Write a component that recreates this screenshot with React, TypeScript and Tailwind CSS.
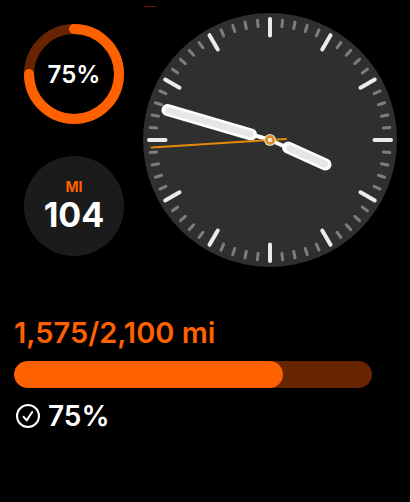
import React from "react";

const MINUTES = Array.from({ length: 60 }, (_, i) => i);

function ProgressRing({ percent }: { percent: number }) {
  return (
    <div className="relative size-[100px]">
      <svg viewBox="0 0 100 100" fill="none" strokeWidth="10" className="size-full -rotate-90" aria-hidden="true">
        <circle cx="50" cy="50" r="45" stroke="#662500" />
        <circle
          cx="50"
          cy="50"
          r="45"
          pathLength="100"
          stroke="#ff6000"
          strokeLinecap="round"
          strokeDasharray={`${percent} 100`}
        />
      </svg>
      <span className="absolute inset-0 flex items-center justify-center pt-0.5 text-2xl font-semibold">
        {percent}%
      </span>
    </div>
  );
}

function AnalogClock() {
  return (
    <svg viewBox="0 0 254 254" className="w-full" role="img" aria-label="Clock" strokeLinecap="round" fill="none">
      <circle cx="127" cy="127" r="127" fill="#2f2f2f" />
      {MINUTES.map((minute) => {
        const isHour = minute % 5 === 0;
        return (
          <line
            key={minute}
            x1="127"
            x2="127"
            y1={isHour ? 6 : 6.5}
            y2={isHour ? 22.5 : 13}
            stroke={isHour ? "#ebebe9" : "#7d7d7b"}
            strokeWidth={isHour ? 4 : 3}
            transform={`rotate(${minute * 6} 127 127)`}
          />
        );
      })}

      {/* hour hand */}
      <path d="M127 127L144 134.5" stroke="#fff" strokeWidth="4" />
      <path d="M145 134.5L182.5 151.5" stroke="#fff" strokeWidth="12" />
      <path d="M147 135.5L181.5 151" stroke="#e6e6e6" strokeWidth="7" />

      {/* minute hand */}
      <path d="M127 127L109 121.5" stroke="#fff" strokeWidth="4" />
      <path d="M108 121.5L24.5 97" stroke="#fff" strokeWidth="12" />
      <path d="M107 121L25.5 97.5" stroke="#e6e6e6" strokeWidth="7" />

      {/* second hand */}
      <path d="M8.5 134.5L143 126" stroke="#e48a0a" strokeWidth="1.8" />
      <circle cx="127" cy="127" r="6" fill="#d8d4cc" />
      <circle cx="127" cy="127" r="3.5" fill="#e8e4dc" stroke="#e08c1c" strokeWidth="2.4" />
    </svg>
  );
}

export default function App() {
  return (
    <main className="min-h-screen bg-black font-['Inter',sans-serif] text-white">
      <div className="pt-1.5 pl-36">
        <div className="h-px w-3 bg-[#6e1414]" />
      </div>

      <section className="flex gap-[19px] pt-1.5 pr-[13px] pl-6">
        <div className="flex shrink-0 flex-col gap-8 pt-[11px]">
          <ProgressRing percent={75} />
          <div className="flex size-[100px] flex-col items-center justify-center rounded-full bg-[#1b1b1b] pt-0.5">
            <span className="text-sm leading-4 font-bold text-[#ff6000]">MI</span>
            <span className="text-[34px] leading-10 font-bold">104</span>
          </div>
        </div>
        <div className="min-w-0 flex-1">
          <AnalogClock />
        </div>
      </section>

      <section className="pt-12 pr-[38px] pl-[14px]">
        <h1 className="text-[29px] leading-9 font-semibold text-[#ff6000]">1,575/2,100 mi</h1>
        <div
          role="progressbar"
          aria-label="Miles"
          aria-valuenow={1575}
          aria-valuemin={0}
          aria-valuemax={2100}
          className="mt-2.5 h-[27px] overflow-hidden rounded-full bg-[#662500]"
        >
          <div className="h-full rounded-full bg-[#ff6000]" style={{ width: `${(1575 / 2100) * 100}%` }} />
        </div>
        <div className="mt-2.5 flex items-center gap-2 pl-0.5">
          <svg
            viewBox="0 0 24 24"
            fill="none"
            stroke="currentColor"
            strokeWidth="2"
            strokeLinecap="round"
            strokeLinejoin="round"
            className="size-6"
            aria-hidden="true"
          >
            <circle cx="12" cy="12" r="11" />
            <path d="M7.6 12.8L10.7 16.4L16.2 8" />
          </svg>
          <span className="text-[28px] leading-9 font-semibold">75%</span>
        </div>
      </section>
    </main>
  );
}
